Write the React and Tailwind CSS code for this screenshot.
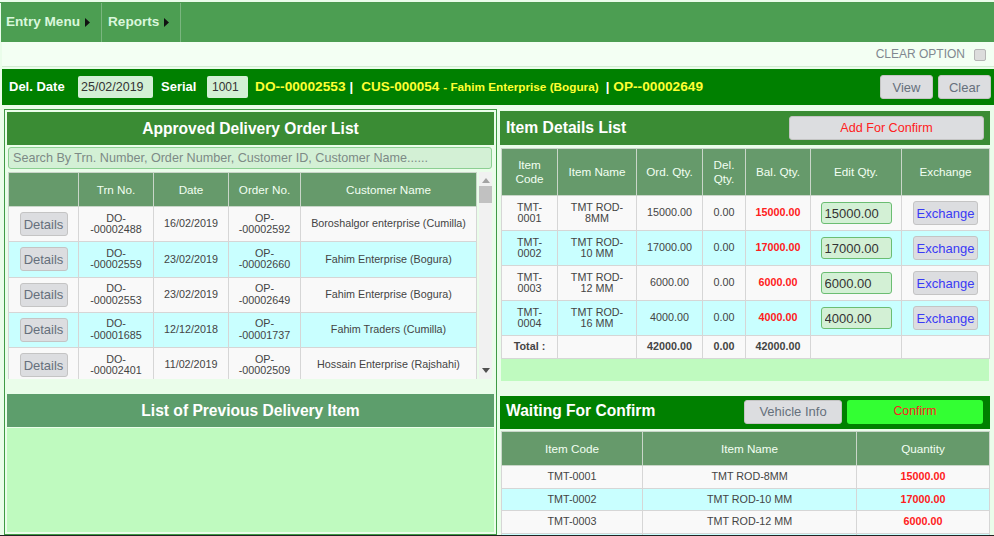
import React from "react";

const orders = [
  ["DO-\n-00002488", "16/02/2019", "OP-\n-00002592", "Boroshalgor enterprise (Cumilla)"],
  ["DO-\n-00002559", "23/02/2019", "OP-\n-00002660", "Fahim Enterprise (Bogura)"],
  ["DO-\n-00002553", "23/02/2019", "OP-\n-00002649", "Fahim Enterprise (Bogura)"],
  ["DO-\n-00001685", "12/12/2018", "OP-\n-00001737", "Fahim Traders (Cumilla)"],
  ["DO-\n-00002401", "11/02/2019", "OP-\n-00002509", "Hossain Enterprise (Rajshahi)"],
];
const items = [
  ["TMT-\n0001", "TMT ROD-\n8MM", "15000.00", "0.00", "15000.00"],
  ["TMT-\n0002", "TMT ROD-\n10 MM", "17000.00", "0.00", "17000.00"],
  ["TMT-\n0003", "TMT ROD-\n12 MM", "6000.00", "0.00", "6000.00"],
  ["TMT-\n0004", "TMT ROD-\n16 MM", "4000.00", "0.00", "4000.00"],
];
const waiting = [
  ["TMT-0001", "TMT ROD-8MM", "15000.00"],
  ["TMT-0002", "TMT ROD-10 MM", "17000.00"],
  ["TMT-0003", "TMT ROD-12 MM", "6000.00"],
  ["", "", ""],
];

const th = "border border-[#c9d6c9] bg-[#669a6b] font-normal text-[#f2fff2] text-[11.7px] leading-[14px] text-center align-middle p-0";
const td = "border border-[#d6d6d6] text-[#444] text-[10.75px] leading-[11.5px] text-center align-middle p-0 whitespace-pre-line";
const btn = "rounded-[3px] border border-[#c4c4c4] bg-[#dcdde0] text-[#66707c]";
const rowBg = (i) => (i % 2 ? "bg-[#c9ffff]" : "bg-[#f9f9f9]");

function Caret() {
  return (
    <svg width="5" height="9" viewBox="0 0 5 9" className="ml-[5px]">
      <path d="M0 0L5 4.5L0 9Z" fill="#111" />
    </svg>
  );
}

function MenuItem({ label, w, pad }) {
  return (
    <div className={`flex items-center h-full border-r border-[#7ab67f] font-bold text-[13.6px] text-[#d9f7dc] ${pad} ${w}`}>
      {label}
      <Caret />
    </div>
  );
}

function OrderTable() {
  return (
    <div className="flex h-[207px] ml-[1px] mr-[2px] mt-[3px] overflow-hidden">
      <table className="table-fixed border-collapse w-[468px] h-fit shrink-0">
        <colgroup>
          <col className="w-[70px]" />
          <col className="w-[75px]" />
          <col className="w-[75px]" />
          <col className="w-[72px]" />
          <col className="w-[176px]" />
        </colgroup>
        <thead>
          <tr className="h-[34px]">
            <th className={th}></th>
            <th className={th}>Trn No.</th>
            <th className={th}>Date</th>
            <th className={th}>Order No.</th>
            <th className={th}>Customer Name</th>
          </tr>
        </thead>
        <tbody>
          {orders.map((r, i) => (
            <tr key={i} className={`h-[35.25px] ${rowBg(i)}`}>
              <td className={td}>
                <button className={`${btn} w-[48px] h-[24px] text-[13px] leading-none`}>Details</button>
              </td>
              {r.map((c, j) => (
                <td key={j} className={td}>{c}</td>
              ))}
            </tr>
          ))}
        </tbody>
      </table>
      <div className="w-[16px] ml-[2px] bg-[#f1f1f1] flex flex-col items-center h-full">
        <svg width="8" height="5" viewBox="0 0 8 5" className="mt-[6px]">
          <path d="M4 0L8 5H0Z" fill="#a3a3a3" />
        </svg>
        <div className="w-[13px] h-[17px] mt-[3px] bg-[#c1c1c1]" />
        <div className="flex-1" />
        <svg width="8" height="5" viewBox="0 0 8 5" className="mb-[6px]">
          <path d="M0 0H8L4 5Z" fill="#505050" />
        </svg>
      </div>
    </div>
  );
}

function ItemTable() {
  return (
    <table className="table-fixed border-collapse w-[488px] ml-[1px] mt-[3px]">
      <colgroup>
        <col className="w-[56px]" />
        <col className="w-[79px]" />
        <col className="w-[66px]" />
        <col className="w-[43px]" />
        <col className="w-[65px]" />
        <col className="w-[91px]" />
        <col className="w-[88px]" />
      </colgroup>
      <thead>
        <tr className="h-[47px]">
          <th className={th}>Item<br />Code</th>
          <th className={th}>Item Name</th>
          <th className={th}>Ord. Qty.</th>
          <th className={th}>Del.<br />Qty.</th>
          <th className={th}>Bal. Qty.</th>
          <th className={th}>Edit Qty.</th>
          <th className={th}>Exchange</th>
        </tr>
      </thead>
      <tbody>
        {items.map((r, i) => (
          <tr key={i} className={`h-[35px] ${rowBg(i)}`}>
            <td className={td}>{r[0]}</td>
            <td className={td}>{r[1]}</td>
            <td className={td}>{r[2]}</td>
            <td className={td}>{r[3]}</td>
            <td className={`${td} font-bold !text-[#ff2020]`}>{r[4]}</td>
            <td className={td}>
              <input
                readOnly
                value={r[4]}
                className="block mx-auto w-[71px] h-[22px] pl-[3px] rounded-[3px] border border-[#6bbd72] bg-[#d3f0d5] text-[#333] text-[13px] outline-none"
              />
            </td>
            <td className={td}>
              <button className="rounded-[3px] border border-[#c4c4c4] bg-[#dcdde0] text-[#3a3af5] w-[65px] h-[24px] text-[13px] leading-none">
                Exchange
              </button>
            </td>
          </tr>
        ))}
        <tr className="h-[23px] bg-[#f9f9f9]">
          <td className={`${td} font-bold`}>Total :</td>
          <td className={td}></td>
          <td className={`${td} font-bold`}>42000.00</td>
          <td className={`${td} font-bold`}>0.00</td>
          <td className={`${td} font-bold`}>42000.00</td>
          <td className={td}></td>
          <td className={td}></td>
        </tr>
      </tbody>
    </table>
  );
}

function WaitingTable() {
  return (
    <table className="table-fixed border-collapse w-[488px] ml-[1px] mt-[2px]">
      <colgroup>
        <col className="w-[141px]" />
        <col className="w-[214px]" />
        <col className="w-[133px]" />
      </colgroup>
      <thead>
        <tr className="h-[34px]">
          <th className={th}>Item Code</th>
          <th className={th}>Item Name</th>
          <th className={th}>Quantity</th>
        </tr>
      </thead>
      <tbody>
        {waiting.map((r, i) => (
          <tr key={i} className={`h-[22.5px] ${rowBg(i)}`}>
            <td className={td}>{r[0]}</td>
            <td className={td}>{r[1]}</td>
            <td className={`${td} font-bold !text-[#ff2020]`}>{r[2]}</td>
          </tr>
        ))}
      </tbody>
    </table>
  );
}

export default function App() {
  return (
    <div className="w-[994px] h-[536px] overflow-hidden flex flex-col bg-[#eafdea] font-['Liberation_Sans',Arial,sans-serif] border-b border-[#222]">
      <div className="h-[3px] shrink-0 bg-[#eafdea] border-b border-[#4c9a50]" />
      <div className="h-[39px] shrink-0 ml-[1px] flex bg-[#4c9e52]">
        <MenuItem label="Entry Menu" w="w-[101px]" pad="pl-[5px]" />
        <MenuItem label="Reports" w="w-[79px]" pad="pl-[6px]" />
      </div>
      <div className="h-[25px] shrink-0 ml-[2px] flex items-center justify-end bg-[#f3fff3] border-b border-[#d2ecd2] pr-[8px]">
        <span className="text-[12px] text-[#808890] mr-[9px]">CLEAR OPTION</span>
        <span className="w-[12px] h-[12px] mt-[1px] rounded-[2px] border border-[#b5b5b5] bg-[#dcdcdc]" />
      </div>
      <div className="h-[36px] shrink-0 mt-[2px] ml-[2px] flex items-center bg-[#008000] pl-[7px] pr-[3px]">
        <span className="font-bold text-[13px] text-white w-[69px]">Del. Date</span>
        <span className="w-[75px] h-[22px] flex items-center pl-[3px] rounded-[2px] bg-[#d3f0d5] text-[#333] text-[12.5px]">25/02/2019</span>
        <span className="font-bold text-[13px] text-white ml-[8px] w-[46px]">Serial</span>
        <span className="w-[41px] h-[22px] flex items-center pl-[5px] rounded-[2px] bg-[#d3f0d5] text-[#333] text-[12px]">1001</span>
        <span className="font-bold text-[13.7px] text-[#ffff33] ml-[7px]">DO--00002553</span>
        <span className="font-bold text-[13px] text-white ml-[4px]">|</span>
        <span className="font-bold text-[13.5px] text-[#ffff33] ml-[8px]">CUS-000054</span>
        <span className="font-bold text-[11.75px] text-[#ffff33] ml-[4px]">- Fahim Enterprise (Bogura)</span>
        <span className="font-bold text-[13px] text-white ml-[7px]">|</span>
        <span className="font-bold text-[13.7px] text-[#ffff33] ml-[4px]">OP--00002649</span>
        <div className="flex-1" />
        <button className={`${btn} w-[53px] h-[24px] text-[13px] leading-none`}>View</button>
        <button className={`${btn} w-[53px] h-[24px] text-[13px] leading-none ml-[5px]`}>Clear</button>
      </div>
      <div className="flex flex-1 min-h-0 pl-[4px]">
        <div className="w-[493px] shrink-0 mt-[4px] border border-[#3f9a45] p-[2px] flex flex-col">
          <div className="h-[33px] shrink-0 flex items-center justify-center bg-[#3a8c34] text-white font-bold text-[15.6px]">
            Approved Delivery Order List
          </div>
          <div className="h-[22px] shrink-0 mt-[2px] mr-[2px] ml-[1px] flex items-center pl-[4px] rounded-[3px] border border-[#8ccf92] bg-[#d3f0d5] text-[#7d8a86] text-[12.6px]">
            Search By Trn. Number, Order Number, Customer ID, Customer Name......
          </div>
          <OrderTable />
          <div className="h-[33px] shrink-0 mt-[15px] flex items-center justify-center bg-[#5d9e6c] text-white font-bold text-[15.6px]">
            List of Previous Delivery Item
          </div>
          <div className="flex-1 mt-[1px] bg-[#bffabf]" />
        </div>
        <div className="w-[490px] shrink-0 ml-[3px] mt-[6px] flex flex-col">
          <div className="h-[34px] shrink-0 flex items-center bg-[#3a8c34] pl-[6px] pr-[6px]">
            <span className="font-bold text-[15.7px] text-white">Item Details List</span>
            <div className="flex-1" />
            <button className="w-[195px] h-[24px] rounded-[3px] border border-[#c4c4c4] bg-[#dcdde0] text-[#ff2020] text-[12.6px] leading-none">
              Add For Confirm
            </button>
          </div>
          <ItemTable />
          <div className="h-[22px] shrink-0 ml-[1px] w-[488px] bg-[#bffabf]" />
          <div className="h-[33px] shrink-0 mt-[15px] flex items-center bg-[#008000] pl-[6px] pr-[7px] pb-[2px]">
            <span className="font-bold text-[15.6px] text-white pb-[2px]">Waiting For Confirm</span>
            <div className="flex-1" />
            <button className={`${btn} w-[98px] h-[24px] text-[13px] leading-none`}>Vehicle Info</button>
            <button className="w-[136px] h-[24px] ml-[5px] rounded-[3px] bg-[#33ff33] text-[#ff2020] text-[12.3px] leading-none">
              Confirm
            </button>
          </div>
          <WaitingTable />
        </div>
      </div>
    </div>
  );
}
